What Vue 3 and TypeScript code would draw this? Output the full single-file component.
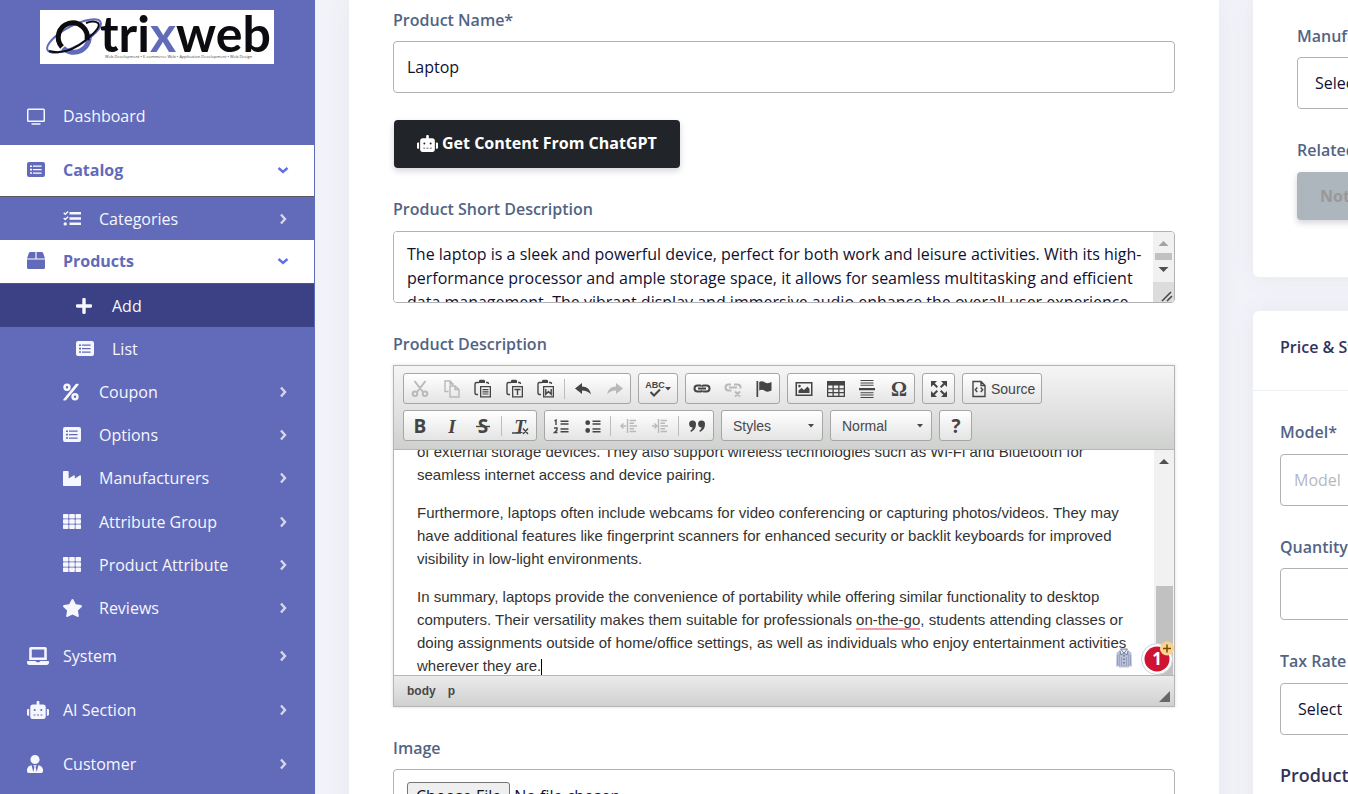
<script setup lang="ts">
import { ref } from 'vue'

interface Shape { box: string; w: number; h: number; d: string }
interface NavItem { label: string; icon: string; level: number; state?: string; arrow?: string }
interface Tool { name: string; fill?: string; stroke?: string; text?: string; cls?: string; off?: boolean; sep?: boolean; wide?: boolean; caption?: string }

const robot = 'M32 224H64V416H32A32 32 0 0 1 0 384V256A32 32 0 0 1 32 224ZM544 176V448a64 64 0 0 1-64 64H160a64 64 0 0 1-64-64V176a80 80 0 0 1 80-80H280V32a40 40 0 0 1 80 0V96H464A80 80 0 0 1 544 176ZM254 256a30 30 0 1 0-60 0a30 30 0 1 0 60 0ZM192 386h56v26h-56ZM292 386h56v26h-56ZM446 256a30 30 0 1 0-60 0a30 30 0 1 0 60 0ZM392 386h56v26h-56ZM640 256V384a32 32 0 0 1-32 32H576V224h32A32 32 0 0 1 640 256Z'
const listD = 'M2 0H16Q18 0 18 2V13Q18 15 16 15H2Q0 15 0 13V2Q0 0 2 0ZM3 3.4V5H5V3.4ZM3 6.8V8.400H5V6.800ZM3 10.200V11.800H5V10.200ZM6 3.400V4.800H14.600V3.400ZM6 6.900V8.300H14.600V6.900ZM6 10.400V11.800H14.600V10.400Z'
const thD = 'M.8 0H4.700Q5.500 0 5.500 .8V3.700Q5.500 4.500 4.700 4.500H.8Q0 4.500 0 3.700V.8Q0 0 .8 0ZM7 0H11Q11.800 0 11.800 .8V3.700Q11.800 4.500 11 4.500H7Q6.200 4.500 6.200 3.700V.8Q6.200 0 7 0ZM13.300 0H17.200Q18 0 18 .8V3.700Q18 4.500 17.200 4.500H13.300Q12.500 4.500 12.500 3.700V.8Q12.500 0 13.300 0ZM.8 5.200H4.700Q5.500 5.200 5.500 6V9Q5.500 9.800 4.700 9.800H.8Q0 9.800 0 9V6Q0 5.200 .8 5.200ZM7 5.200H11Q11.800 5.200 11.800 6V9Q11.800 9.800 11 9.800H7Q6.200 9.800 6.200 9V6Q6.200 5.200 7 5.200ZM13.300 5.200H17.200Q18 5.200 18 6V9Q18 9.800 17.200 9.800H13.300Q12.500 9.800 12.500 9V6Q12.500 5.200 13.300 5.200ZM.8 10.500H4.700Q5.500 10.500 5.500 11.300V14.200Q5.500 15 4.700 15H.8Q0 15 0 14.200V11.300Q0 10.500 .8 10.500ZM7 10.500H11Q11.800 10.500 11.800 11.300V14.200Q11.800 15 11 15H7Q6.200 15 6.200 14.200V11.300Q6.200 10.500 7 10.500ZM13.300 10.500H17.200Q18 10.500 18 11.300V14.200Q18 15 17.200 15H13.300Q12.500 15 12.500 14.200V11.300Q12.500 10.500 13.300 10.500Z'

const shapes: Record<string, Shape> = {
  monitor: { box: '0 0 18 17', w: 18, h: 17, d: 'M1.500 .5H16.500Q18 .5 18 2V12.500Q18 14 16.500 14H1.500Q0 14 0 12.500V2Q0 .5 1.500 .5ZM1.500 2V12.500H16.500V2ZM4.500 15.200H13.500V16.700H4.500Z' },
  list: { box: '0 0 18 15', w: 18, h: 15, d: listD },
  tasks: { box: '0 0 18 15', w: 18, h: 15, d: 'M6.500 1H18V3.500H6.500ZM6.500 6.300H18V8.800H6.500ZM6.500 11.600H18V14.100H6.500ZM.2 2.300L1.200 1.300L2.300 2.300L4.600 0L5.600 1L2.300 4.300ZM.2 7.600L1.200 6.600L2.300 7.600L4.600 5.300L5.600 6.300L2.300 9.600ZM2.200 11.200A1.700 1.700 0 1 1 2.200 14.600A1.700 1.700 0 1 1 2.200 11.200Z' },
  box: { box: '0 0 512 512', w: 18, h: 17, d: 'M509.500 184.600L458.900 32.800C452.400 13.200 434.100 0 413.400 0H272v192h238.700c-.4-2.500-.4-5-1.200-7.400zM240 0H98.600c-20.700 0-39 13.200-45.500 32.800L2.500 184.600c-.8 2.400-.8 4.900-1.200 7.400H240V0zM0 224v240c0 26.500 21.500 48 48 48h416c26.500 0 48-21.500 48-48V224H0z' },
  plus: { box: '0 32 448 448', w: 16, h: 16, d: 'M416 208H272V64c0-17.700-14.300-32-32-32h-32c-17.700 0-32 14.300-32 32v144H32c-17.700 0-32 14.300-32 32v32c0 17.700 14.300 32 32 32h144v144c0 17.700 14.300 32 32 32h32c17.700 0 32-14.300 32-32V304h144c17.700 0 32-14.300 32-32v-32c0-17.700-14.300-32-32-32z' },
  percent: { box: '0 0 16 18', w: 16, h: 18, d: 'M4 .5A3.700 3.700 0 1 1 4 7.900A3.700 3.700 0 1 1 4 .5ZM4 3A1.200 1.200 0 1 0 4 5.400A1.200 1.200 0 1 0 4 3ZM12 10.100A3.700 3.700 0 1 1 12 17.500A3.700 3.700 0 1 1 12 10.100ZM12 12.600A1.200 1.200 0 1 0 12 15A1.200 1.200 0 1 0 12 12.600ZM13.500 .8H15.300Q16 1 15.500 1.900L3.200 17Q2.900 17.400 2.300 17.400H.7Q-.1 17.100 .5 16.300L12.500 1.300Q12.900 .8 13.500 .8Z' },
  industry: { box: '0 32 512 448', w: 18, h: 15, d: 'M475.100 163.800L336 252.300v-68.300c0-18.900-20.900-30.400-36.900-20.200L160 252.300V56c0-13.300-10.700-24-24-24H24C10.700 32 0 42.700 0 56v400c0 13.300 10.700 24 24 24h464c13.300 0 24-10.700 24-24V184c0-18.900-20.900-30.400-36.900-20.200z' },
  grid: { box: '0 0 18 15', w: 18, h: 15, d: thD },
  star: { box: '20 0 536 512', w: 19, h: 18, d: 'M259.300 17.800L194 150.200 47.900 171.500c-26.200 3.800-36.700 36.100-17.700 54.600l105.700 103-25 145.500c-4.500 26.300 23.200 46 46.400 33.700L288 439.600l130.700 68.700c23.200 12.200 50.900-7.400 46.400-33.700l-25-145.500 105.700-103c19-18.500 8.500-50.800-17.700-54.600L382 150.200 316.700 17.800c-11.700-23.600-45.600-23.900-57.400 0z' },
  laptop: { box: '0 0 640 512', w: 22, h: 18, d: 'M624 400H381.500c-.7 19.800-14.700 32-32.700 32H288c-18.700 0-33-17.500-32.800-32H16c-8.800 0-16 7.200-16 16v32c0 35.200 28.800 64 64 64h512c35.200 0 64-28.800 64-64v-32c0-8.800-7.200-16-16-16zM576 48c0-26.400-21.600-48-48-48H112C85.600 0 64 21.600 64 48v320h512V48zM502 300H138V72h364z' },
  robot: { box: '0 0 640 512', w: 22, h: 18, d: robot },
  tie: { box: '0 0 448 512', w: 16, h: 18, d: 'M224 256c70.700 0 128-57.300 128-128S294.700 0 224 0 96 57.300 96 128s57.300 128 128 128zm95.800 32.600L272 480l-32-136 32-56h-96l32 56-32 136-47.800-191.400C56.900 292 0 350.300 0 422.400V464c0 26.500 21.500 48 48 48h352c26.500 0 48-21.500 48-48v-41.600c0-72.100-56.900-130.400-128.200-133.800z' },
}

const nav: NavItem[] = [
  { label: 'Dashboard', icon: 'monitor', level: 0, state: 'first' },
  { label: 'Catalog', icon: 'list', level: 0, state: 'open', arrow: 'down' },
  { label: 'Categories', icon: 'tasks', level: 1, arrow: 'right' },
  { label: 'Products', icon: 'box', level: 0, state: 'open slim', arrow: 'down' },
  { label: 'Add', icon: 'plus', level: 2, state: 'current' },
  { label: 'List', icon: 'list', level: 2 },
  { label: 'Coupon', icon: 'percent', level: 1, arrow: 'right' },
  { label: 'Options', icon: 'list', level: 1, arrow: 'right' },
  { label: 'Manufacturers', icon: 'industry', level: 1, state: 'slim', arrow: 'right' },
  { label: 'Attribute Group', icon: 'grid', level: 1, arrow: 'right' },
  { label: 'Product Attribute', icon: 'grid', level: 1, arrow: 'right' },
  { label: 'Reviews', icon: 'star', level: 1, arrow: 'right' },
  { label: 'System', icon: 'laptop', level: 0, arrow: 'right' },
  { label: 'AI Section', icon: 'robot', level: 0, arrow: 'right' },
  { label: 'Customer', icon: 'tie', level: 0, arrow: 'right' },
]

const board = 'M6 3.500H3.500Q2 3.500 2 5V14Q2 15.500 3.500 15.500H5M13 3.500H14.500Q15.500 3.500 15.500 5'
const boardClip = 'M6 2Q6 .8 7.500 .8H10.500Q12 .8 12 2V4H6ZM7 7H18V18.500H7ZM8.300 8.300V17.200H16.700V8.300Z'
const sep: Tool = { name: 'separator', sep: true }

const rowOne: { tight?: boolean; tools: Tool[] }[] = [
  { tools: [
    { name: 'Cut', off: true, stroke: 'M4.500 2L13 13M15.500 2L7 13M5 12.500A2.300 2.300 0 1 1 5 17.100A2.300 2.300 0 1 1 5 12.500M15 12.500A2.300 2.300 0 1 1 15 17.100A2.300 2.300 0 1 1 15 12.500', cls: 'bold' },
    { name: 'Copy', off: true, stroke: 'M6.500 12.500H3V2H8L11 5V6M8 2V5H11M8 7H13L17 10.500V18H8ZM13 7V10.500H17' },
    { name: 'Paste', stroke: board, fill: boardClip + 'M9.500 10H15.500V11.200H9.500ZM9.500 12.200H15.500V13.400H9.500ZM9.500 14.400H15.500V15.600H9.500Z' },
    { name: 'Paste as plain text', stroke: board, fill: boardClip + 'M9.500 9.700H15.500V11.200H13.200V16H11.800V11.200H9.500Z' },
    { name: 'Paste from Word', stroke: board + 'M9.800 10V15.200L12.500 12.500L15.200 15.200V10', fill: boardClip },
    sep,
    { name: 'Undo', fill: 'M2 9.500L9 4V7.500Q16.500 7.500 18 15.500Q14.500 11.500 9 11.500V15Z' },
    { name: 'Redo', off: true, fill: 'M18 9.500L11 4V7.500Q3.500 7.500 2 15.500Q5.500 11.500 11 11.500V15Z' },
  ] },
  { tools: [{ name: 'Spell Check As You Type', wide: true, text: 'ABC', cls: 'abc', stroke: 'M5.500 13L9 16.500L15 10.500' }] },
  { tight: true, tools: [
    { name: 'Link', cls: 'bold', stroke: 'M9 6.500H5.500Q2.500 6.500 2.500 9.500Q2.500 12.500 5.500 12.500H8.500Q10 12.500 10.500 11.500M11 12.500H14.500Q17.500 12.500 17.500 9.500Q17.500 6.500 14.500 6.500H11.500Q10 6.500 9.500 7.500M6 9.500H14' },
    { name: 'Unlink', off: true, cls: 'bold', stroke: 'M8 5.500H5.500Q2.500 5.500 2.500 8.500Q2.500 11.500 5.500 11.500H8.500M11 5.500H14.500Q17.500 5.500 17.500 8.500V9.500M6 8.500H14M12 12.500L17 17.500M17 12.500L12 17.500' },
    { name: 'Anchor', fill: 'M2.500 2H4.200V18H2.500ZM5.200 3Q8 1.500 11 3.500Q14 5 17.500 3V11.500Q14 13.500 11 12Q8 10 5.200 11.500Z' },
  ] },
  { tools: [
    { name: 'Image', fill: 'M1.500 3H18.500V17H1.500ZM3 4.500V15.500H17V4.500ZM4.500 14V11.500L7.500 9L10 11L13.500 7.500L15.500 10V14ZM5.500 5.800A1.300 1.300 0 1 1 5.500 8.400A1.300 1.300 0 1 1 5.500 5.800Z' },
    { name: 'Table', fill: 'M1 2H19V18H1ZM2.300 6.500V9.300H6.500V6.500ZM7.800 6.500V9.300H12.200V6.500ZM13.500 6.500V9.300H17.700V6.500ZM2.300 10.500V13H6.500V10.500ZM7.800 10.500V13H12.200V10.500ZM13.500 10.500V13H17.700V10.500ZM2.300 14.200V16.700H6.500V14.200ZM7.800 14.200V16.700H12.200V14.200ZM13.500 14.200V16.700H17.700V14.200Z' },
    { name: 'Insert Horizontal Line', fill: 'M2 9H18V11.200H2ZM3.500 1H16.500V2H3.500ZM3.500 3.400H16.500V4.400H3.500ZM3.500 5.800H16.500V6.800H3.500ZM3.500 13.200H16.500V14.200H3.500ZM3.500 15.600H16.500V16.600H3.500ZM3.500 18H16.500V19H3.500Z' },
    { name: 'Insert Special Character', text: 'Ω', cls: 'omega' },
  ] },
  { tight: true, tools: [
    { name: 'Maximize', cls: 'bold', fill: 'M2 2H8L2 8ZM18 2V8L12 2ZM2 18V12L8 18ZM18 18H12L18 12Z', stroke: 'M4 4L8.300 8.300M16 4L11.700 8.300M4 16L8.300 11.700M16 16L11.700 11.700' },
  ] },
  { tools: [
    { name: 'Source', wide: true, caption: 'Source', stroke: 'M4 2.500H12L16 6.500V17.500H4ZM8.300 8.500L6.300 10.800L8.300 13M11.700 8.500L13.700 10.800L11.700 13M12 3V6.500H16' },
  ] },
]

const rowTwo: { tight?: boolean; tools: Tool[] }[] = [
  { tools: [
    { name: 'Bold', text: 'B', cls: 'letter' },
    { name: 'Italic', text: 'I', cls: 'letter slant' },
    { name: 'Strikethrough', text: 'S', cls: 'letter', stroke: 'M3 10.500H17' },
    sep,
    { name: 'Remove Format', text: 'T', cls: 'letter slant', stroke: 'M2 17H11M13 12.500L18 18M18 12.500L13 18' },
  ] },
  { tools: [
    { name: 'Insert/Remove Numbered List', fill: 'M9.500 4.500H17.500V6H9.500ZM9.500 7.300H17.500V8.800H9.500ZM9.500 12.300H17.500V13.800H9.500ZM9.500 15.100H17.500V16.600H9.500Z', stroke: 'M3.500 5L5 4V9M3 12H6V14L3.500 16.500H6.500' },
    { name: 'Insert/Remove Bulleted List', fill: 'M9.500 4.500H17.500V6H9.500ZM9.500 7.300H17.500V8.800H9.500ZM9.500 12.300H17.500V13.800H9.500ZM9.500 15.100H17.500V16.600H9.500ZM4.700 4.300A2.400 2.400 0 1 1 4.700 9.100A2.400 2.400 0 1 1 4.700 4.300ZM4.700 12.100A2.400 2.400 0 1 1 4.700 16.900A2.400 2.400 0 1 1 4.700 12.100Z' },
    sep,
    { name: 'Decrease Indent', off: true, stroke: 'M8.500 3V17M2 10H7M4.500 7.500L2 10L4.500 12.500M10.500 4.500H17M10.500 7.300H15M10.500 10H18M10.500 12.700H15M10.500 15.500H17' },
    { name: 'Increase Indent', off: true, stroke: 'M8.500 3V17M2 10H7M4.500 7.500L7 10L4.500 12.500M10.500 4.500H17M10.500 7.300H15M10.500 10H18M10.500 12.700H15M10.500 15.500H17' },
    sep,
    { name: 'Block Quote', fill: 'M5.500 4.500A3.500 3.500 0 0 1 9 8Q9 13.500 4 16L3.300 14.800Q5.500 13.300 5.700 11.500A3.500 3.500 0 0 1 5.500 4.500ZM14.500 4.500A3.500 3.500 0 0 1 18 8Q18 13.500 13 16L12.300 14.800Q14.500 13.300 14.700 11.500A3.500 3.500 0 0 1 14.500 4.500Z' },
  ] },
]

const rows = [rowOne, rowTwo]
const productName = ref('Laptop')
const shortText = ref('The laptop is a sleek and powerful device, perfect for both work and leisure activities. With its high-performance processor and ample storage space, it allows for seamless multitasking and efficient data management. The vibrant display and immersive audio enhance the overall user experience,')
</script>

<template>
  <div class="page">
    <aside class="sidebar">
      <a class="brand" href="#" aria-label="Otrixweb">
        <svg class="logo" viewBox="0 0 234 54" role="img">
          <rect width="234" height="54" fill="#fff" />
          <g fill="none">
            <path d="M49 24A15.500 15.500 0 0 1 23 38" stroke="#626aba" stroke-width="5" />
            <ellipse cx="34" cy="26" rx="30" ry="10" transform="rotate(-28 34 26)" stroke="#626aba" stroke-width="2" />
            <path d="M22 37A14.500 14.500 0 1 1 47 30" stroke="#0b0b10" stroke-width="5" />
            <path d="M9 41Q27 46 46 30Q62 17 58 13Q54 10 46 13" stroke="#0b0b10" stroke-width="2" />
          </g>
          <text x="60" y="42" class="logo-word">tri<tspan fill="#626aba">x</tspan>web</text>
          <text x="65" y="48" class="logo-tag">Web Development • E-commerce Web • Application Development • Web Design</text>
        </svg>
      </a>
      <nav>
        <a v-for="item in nav" :key="item.label" href="#" class="nav-item" :class="['level-' + item.level, item.state]">
          <span class="nav-icon">
            <svg :width="shapes[item.icon].w" :height="shapes[item.icon].h" :viewBox="shapes[item.icon].box" preserveAspectRatio="none">
              <path :d="shapes[item.icon].d" fill="currentColor" fill-rule="evenodd" />
            </svg>
          </span>
          <span class="nav-label">{{ item.label }}</span>
          <svg v-if="item.arrow" class="nav-arrow" :class="item.arrow" width="12" height="12" viewBox="0 0 12 12">
            <path :d="item.arrow === 'down' ? 'M1.500 4L6 8L10.500 4' : 'M4 1.500L8 6L4 10.500'" fill="none" stroke="currentColor" stroke-width="2.400" />
          </svg>
        </a>
      </nav>
    </aside>

    <main class="content">
      <form class="card main-card" @submit.prevent>
        <label for="name">Product Name*</label>
        <input id="name" v-model="productName" class="control" type="text" />
        <button type="button" class="gpt">
          <svg width="21" height="17" viewBox="0 0 640 512"><path :d="robot" fill="currentColor" fill-rule="evenodd" /></svg>
          Get Content From ChatGPT
        </button>

        <label for="short" class="roomy">Product Short Description</label>
        <div class="area">
          <textarea id="short" v-model="shortText" spellcheck="false"></textarea>
          <div class="area-bar" aria-hidden="true">
            <svg width="21" height="50" viewBox="0 0 21 50">
              <path d="M5.500 14L10.500 9L15.500 14Z" fill="#a3a3a3" />
              <rect x="2" y="21" width="17" height="7" fill="#c1c1c1" />
              <path d="M5.500 35L10.500 40L15.500 35Z" fill="#505050" />
            </svg>
            <svg class="grip" width="21" height="20" viewBox="0 0 21 20">
              <path d="M9 19L18 10M14 19L19 14" stroke="#444" stroke-width="1.500" />
            </svg>
          </div>
        </div>

        <label id="desc-label">Product Description</label>
        <section class="editor">
          <div class="toolbar" role="toolbar" aria-label="Editor toolbar">
            <div v-for="(row, r) in rows" :key="r" class="tool-row">
              <div v-for="(group, g) in row" :key="g" class="group" :class="{ tight: group.tight }">
                <template v-for="(tool, t) in group.tools" :key="t">
                  <span v-if="tool.sep" class="sep"></span>
                  <button v-else type="button" class="tool" :class="{ off: tool.off, wide: tool.wide }" :aria-label="tool.name" :disabled="tool.off">
                    <svg width="20" height="20" viewBox="0 0 20 20" :class="tool.cls">
                      <path v-if="tool.fill" :d="tool.fill" fill="currentColor" fill-rule="evenodd" />
                      <text v-if="tool.text" x="10" text-anchor="middle" :y="tool.cls === 'abc' ? 9 : 17" fill="currentColor">{{ tool.text }}</text>
                      <path v-if="tool.stroke" class="line" :d="tool.stroke" fill="none" stroke="currentColor" />
                    </svg>
                    <span v-if="tool.caption">{{ tool.caption }}</span>
                    <svg v-if="tool.cls === 'abc'" width="6" height="4" viewBox="0 0 6 4"><path d="M0 0H6L3 3.500Z" fill="#484848" /></svg>
                  </button>
                </template>
              </div>
              <template v-if="r === 1">
                <div class="group combo">
                  <select aria-label="Styles"><option>Styles</option></select>
                  <svg width="6" height="4" viewBox="0 0 6 4"><path d="M0 0H6L3 3.500Z" fill="#484848" /></svg>
                </div>
                <div class="group combo">
                  <select aria-label="Paragraph Format"><option>Normal</option></select>
                  <svg width="6" height="4" viewBox="0 0 6 4"><path d="M0 0H6L3 3.500Z" fill="#484848" /></svg>
                </div>
                <div class="group tight">
                  <button type="button" class="tool" aria-label="About">
                    <svg width="20" height="20" viewBox="0 0 20 20" class="letter"><text x="10" y="17" text-anchor="middle" fill="currentColor">?</text></svg>
                  </button>
                </div>
              </template>
            </div>
          </div>
          <div class="canvas">
            <div class="prose" contenteditable="true" spellcheck="false" role="textbox" aria-labelledby="desc-label">
              <p>of external storage devices. They also support wireless technologies such as Wi-Fi and Bluetooth for seamless internet access and device pairing.</p>
              <p>Furthermore, laptops often include webcams for video conferencing or capturing photos/videos. They may have additional features like fingerprint scanners for enhanced security or backlit keyboards for improved visibility in low-light environments.</p>
              <p>In summary, laptops provide the convenience of portability while offering similar functionality to desktop computers. Their versatility makes them suitable for professionals <span class="flagged">on-the-go</span>, students attending classes or doing assignments outside of home/office settings, as well as individuals who enjoy entertainment activities wherever they are.<span class="caret"></span></p>
            </div>
            <div class="canvas-bar" aria-hidden="true">
              <svg width="19" height="20" viewBox="0 0 19 20"><path d="M5 14L10 9L15 14Z" fill="#505050" /></svg>
              <div class="thumb"></div>
            </div>
            <div class="helper">
              <svg width="18" height="20" viewBox="0 0 18 20" aria-hidden="true">
                <path d="M5 2L1.500 5L1 18.500H4V19.500H14V18.500H17L16.500 5L13 2L9 5Z" fill="#b9c2da" />
                <path d="M4.300 6V18M13.700 6V18M2.500 7V17M15.500 7V17M6.500 9V18M11.500 9V18" stroke="#8f99b8" stroke-width=".8" />
                <path d="M5.500 1H12.500L9 5ZM5 3L6 7L9 5L12 7L13 3" fill="#e4e8f3" stroke="#69738f" stroke-width=".9" />
                <path d="M9 7V18" stroke="#59627c" stroke-width="1.300" stroke-dasharray="1.500 2" />
              </svg>
              <svg width="34" height="34" viewBox="0 0 34 34" role="img" aria-label="1 suggestion">
                <circle cx="17" cy="18" r="15.500" fill="#fff" stroke="#cdd0dc" />
                <circle cx="17" cy="18" r="12.500" fill="#ce1431" />
                <text x="17" y="24" text-anchor="middle" class="count">1</text>
                <circle cx="27" cy="7.500" r="7" fill="#fbd38f" />
                <path d="M27 3.500V11.500M23 7.500H31" stroke="#7a4a08" stroke-width="1.500" />
              </svg>
            </div>
          </div>
          <footer class="status">
            <span>body</span><span>p</span>
            <svg width="11" height="11" viewBox="0 0 11 11"><path d="M11 0V11H0Z" fill="#666" /></svg>
          </footer>
        </section>

        <label for="image">Image</label>
        <input id="image" class="control file" type="file" />
      </form>

      <div class="side">
        <section class="card side-top">
          <label for="maker">Manufacturer</label>
          <select id="maker" class="control"><option>Select Manufacturer</option></select>
          <label for="related" class="roomy">Related Products</label>
          <button id="related" type="button" class="muted" disabled>Nothing Selected</button>
        </section>
        <section class="card side-price">
          <h2>Price &amp; Stock</h2>
          <div class="side-body">
            <label for="model" class="roomy">Model*</label>
            <input id="model" class="control" type="text" placeholder="Model" />
            <label for="qty">Quantity*</label>
            <input id="qty" class="control" type="text" />
            <label for="tax" class="roomy">Tax Rate</label>
            <select id="tax" class="control"><option>Select</option></select>
            <h3>Product Dimensions</h3>
          </div>
        </section>
      </div>
    </main>
  </div>
</template>

<style>
body {
  background: #f2f3f9;
}
</style>

<style scoped>
* {
  box-sizing: border-box;
}
.page {
  display: flex;
  height: 100vh;
  overflow: hidden;
  font-family: "Open Sans", "Noto Sans", sans-serif;
  font-size: 16px;
  line-height: 24px;
}
.sidebar {
  flex: 0 0 315px;
  padding-right: 1px;
  background: #626aba;
}
.brand {
  display: flex;
  justify-content: center;
  height: 87px;
  padding-top: 10px;
}
.logo {
  width: 234px;
  height: 54px;
}
.logo-word {
  font: 700 50px Lato, sans-serif;
  fill: #0b0b10;
}
.logo-tag {
  font: 4px "Open Sans", sans-serif;
  fill: #444;
}
.nav-item {
  display: flex;
  align-items: center;
  height: 54px;
  padding: 0 25px 0 27px;
  color: #f6f7fc;
  text-decoration: none;
  font-weight: 500;
}
.nav-icon {
  display: flex;
  width: 36px;
}
.nav-label {
  flex: 1;
}
.nav-arrow.right {
  color: #d5d8e4;
}
.nav-arrow.down {
  color: #5f6fe8;
}
.level-1,
.level-2 {
  height: 43px;
  padding-left: 63px;
}
.level-2 {
  padding-left: 76px;
}
.first {
  height: 58px;
}
.open {
  height: 52px;
  padding-bottom: 2px;
  background: #fff;
  border-bottom: 1px solid #5a5560;
  color: #626aba;
  font-weight: 700;
}
.slim {
  height: 44px;
}
.current {
  background: #3b4184;
}
.content {
  flex: 1;
  min-width: 0;
  display: grid;
  grid-template-columns: minmax(0, 1fr) 95px;
  gap: 34px;
  padding-left: 34px;
}
.card {
  background: #fff;
  box-shadow: 0 0 24px rgba(82, 95, 120, 0.07);
}
label {
  display: block;
  height: 24px;
  margin: 29px 0 9px;
  color: #526484;
  font-weight: 600;
}
label.roomy {
  margin-bottom: 10px;
}
.main-card {
  padding: 8px 44px 0;
}
.main-card > label:first-child {
  margin-top: 0;
}
.control {
  display: block;
  width: 100%;
  height: 52px;
  padding: 0 13px;
  border: 1px solid #b2b2b2;
  border-radius: 4px;
  background: #fff;
  color: #101033;
  font: 400 16px/24px "Open Sans", sans-serif;
  appearance: none;
}
.control::placeholder {
  color: #b3b8c2;
}
.file {
  padding: 12px 13px;
}
.file::file-selector-button {
  height: 28px;
  margin-right: 4px;
  padding: 0 8px;
  border: 1px solid #767676;
  border-radius: 3px;
  background: #efefef;
  color: #101010;
  font: 400 16px/24px "Open Sans", sans-serif;
}
.gpt {
  display: flex;
  align-items: center;
  gap: 4px;
  height: 48px;
  margin: 27px 1px 0;
  padding: 0 23px 2px;
  border: 0;
  border-radius: 4px;
  background: #212529;
  box-shadow: 0 3px 6px rgba(40, 40, 80, 0.2);
  color: #fff;
  font: 700 16px/24px "Open Sans", sans-serif;
}
.area {
  display: flex;
  height: 72px;
  border: 1px solid #b2b2b2;
  border-radius: 4px;
  overflow: hidden;
}
.area textarea {
  flex: 1;
  min-width: 0;
  padding: 10px 4px 0 13px;
  border: 0;
  outline: 0;
  resize: none;
  overflow: hidden;
  color: #101033;
  font: 400 16px/24px "Open Sans", sans-serif;
}
.area-bar {
  display: flex;
  flex-direction: column;
  background: #f1f1f1;
}
.grip {
  background: #dcdcdc;
}
.editor {
  border: 1px solid #b6b6b6;
  box-shadow: 0 0 3px rgba(0, 0, 0, 0.15);
  color: #484848;
  font-family: "Liberation Sans", Arial, sans-serif;
}
.toolbar {
  display: flex;
  flex-direction: column;
  gap: 6px;
  padding: 7px 9px 8px;
  border-bottom: 1px solid #b6b6b6;
  background: linear-gradient(#f5f5f5, #cfd1cf);
}
.tool-row {
  display: flex;
  gap: 7px;
}
.group {
  display: flex;
  align-items: center;
  height: 31px;
  border: 1px solid #a6a6a6;
  border-radius: 3px;
  background: linear-gradient(#fff, #e4e4e4);
}
.tool {
  display: flex;
  align-items: center;
  justify-content: center;
  width: 32px;
  height: 29px;
  padding: 0;
  border: 0;
  background: none;
  color: #454545;
  font: 14px "Liberation Sans", Arial, sans-serif;
}
.tool:nth-child(even),
.tight .tool {
  width: 31px;
}
.tool.wide {
  width: auto;
  gap: 2px;
  padding: 0 6px;
}
.tool.wide:has(.abc) {
  gap: 0;
}
.tool.off {
  color: #b9b9b9;
}
.line {
  stroke-width: 1.4;
}
.bold .line,
.abc .line {
  stroke-width: 2;
}
.letter text {
  font: 700 19px "Open Sans", sans-serif;
}
.slant text {
  font-family: "Liberation Serif", serif;
  font-style: italic;
}
.omega text {
  font: 700 20px "Liberation Serif", serif;
}
.abc text {
  font: 700 9px "Liberation Sans", sans-serif;
}
.sep {
  width: 1px;
  height: 20px;
  margin: 0 2px;
  background: #bdbdbd;
}
.combo {
  width: 102px;
  padding-right: 8px;
}
.combo select {
  flex: 1;
  min-width: 0;
  padding: 0 0 0 11px;
  border: 0;
  background: none;
  appearance: none;
  color: #484848;
  font: 14px "Liberation Sans", Arial, sans-serif;
}
.canvas {
  position: relative;
  display: flex;
  height: 225px;
  overflow: hidden;
}
.prose {
  flex: 1;
  min-width: 0;
  padding: 0 25px 0 23px;
  outline: 0;
  color: #333;
  font-size: 15px;
  line-height: 23px;
}
.prose p {
  margin: 0 0 15px;
}
.prose p:first-child {
  margin-top: -10px;
}
.flagged {
  border-bottom: 2px solid #f39aa6;
}
.caret {
  display: inline-block;
  width: 1px;
  height: 17px;
  background: #000;
  vertical-align: middle;
}
.canvas-bar {
  display: flex;
  flex-direction: column;
  justify-content: space-between;
  width: 20px;
  background: #f1f1f1;
}
.thumb {
  height: 89px;
  margin: 0 1px 0 2px;
  background: #c1c1c1;
}
.helper {
  position: absolute;
  right: 0;
  bottom: 0;
  display: flex;
  align-items: center;
  gap: 7px;
}
.count {
  fill: #fff;
  font: 700 17px "Open Sans", sans-serif;
}
.status {
  display: flex;
  align-items: center;
  gap: 12px;
  height: 31px;
  padding: 0 4px 0 13px;
  border-top: 1px solid #b6b6b6;
  background: linear-gradient(#ebebeb, #cfd1cf);
  font-size: 12px;
  font-weight: 700;
}
.status svg {
  margin: 10px 0 0 auto;
}
.side {
  min-width: 0;
  display: flex;
  flex-direction: column;
  gap: 34px;
}
.side .card {
  width: 420px;
}
.side-top {
  flex: none;
  padding: 24px 44px 57px;
  border-radius: 0 0 6px 6px;
}
.side-top > label:first-child {
  margin-top: 0;
}
.side select {
  padding-left: 17px;
}
.muted {
  display: block;
  height: 48px;
  padding: 0 23px;
  border: 0;
  border-radius: 4px;
  background: #adb5bd;
  box-shadow: 0 3px 6px rgba(40, 40, 80, 0.2);
  color: #999;
  font: 700 16px/24px "Open Sans", sans-serif;
}
.side-price {
  flex: 1 0 auto;
  border-radius: 6px 6px 0 0;
}
h2,
h3 {
  margin: 0;
  font-size: 16px;
  font-weight: 600;
  line-height: 24px;
  color: #33335c;
}
h2 {
  padding: 24px 27px 31px;
  border-bottom: 1px solid #eeeff3;
}
h3 {
  margin-top: 28px;
  font-size: 18px;
}
.side-body {
  padding: 0 27px;
}
</style>
